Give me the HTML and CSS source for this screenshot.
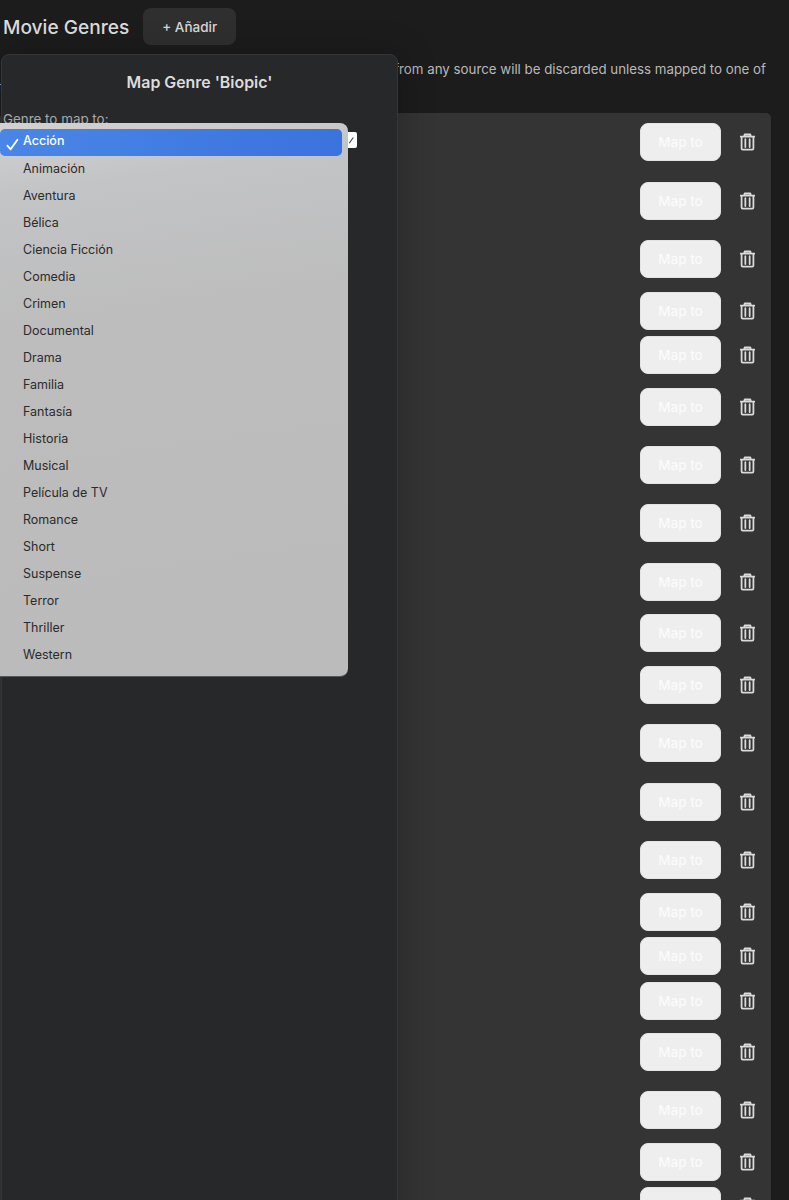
FILE: index.html
```html
<!DOCTYPE html>
<html lang="es">
<head>
<meta charset="utf-8">
<title>Movie Genres</title>
<link rel="stylesheet" href="styles.css">
</head>
<body>
<svg class="defs" width="0" height="0" aria-hidden="true">
  <symbol id="trash" viewBox="0 0 16 18">
    <path d="M.6 3.2h14.8M4.4 3 5 1h6l.6 2M1.7 3.4v12.6c0 .7.5 1.1 1.1 1.1h10.4c.6 0 1.1-.4 1.1-1.1V3.4M5.7 6v8.4M10.3 6v8.4" fill="none" stroke="currentColor" stroke-width="1.9" stroke-linecap="round" stroke-linejoin="round"/>
  </symbol>
</svg>
<main class="page">
  <header class="head">
    <h1 class="title">Movie Genres</h1>
    <button class="add">+ Añadir</button>
  </header>
  <div class="desc">
    <p class="desc-line">Genres from any source will be discarded unless mapped to one of</p>
    <p class="desc-rest">these.</p>
  </div>
  <section class="list">
    <div class="row"><button class="map">Map to</button><button class="del"><svg class="ico"><use href="#trash"/></svg></button></div>
    <div class="row"><button class="map">Map to</button><button class="del"><svg class="ico"><use href="#trash"/></svg></button></div>
    <div class="row"><button class="map">Map to</button><button class="del"><svg class="ico"><use href="#trash"/></svg></button></div>
    <div class="row short"><button class="map">Map to</button><button class="del"><svg class="ico"><use href="#trash"/></svg></button></div>
    <div class="row short"><button class="map">Map to</button><button class="del"><svg class="ico"><use href="#trash"/></svg></button></div>
    <div class="row"><button class="map">Map to</button><button class="del"><svg class="ico"><use href="#trash"/></svg></button></div>
    <div class="row"><button class="map">Map to</button><button class="del"><svg class="ico"><use href="#trash"/></svg></button></div>
    <div class="row"><button class="map">Map to</button><button class="del"><svg class="ico"><use href="#trash"/></svg></button></div>
    <div class="row"><button class="map">Map to</button><button class="del"><svg class="ico"><use href="#trash"/></svg></button></div>
    <div class="row short"><button class="map">Map to</button><button class="del"><svg class="ico"><use href="#trash"/></svg></button></div>
    <div class="row"><button class="map">Map to</button><button class="del"><svg class="ico"><use href="#trash"/></svg></button></div>
    <div class="row"><button class="map">Map to</button><button class="del"><svg class="ico"><use href="#trash"/></svg></button></div>
    <div class="row"><button class="map">Map to</button><button class="del"><svg class="ico"><use href="#trash"/></svg></button></div>
    <div class="row"><button class="map">Map to</button><button class="del"><svg class="ico"><use href="#trash"/></svg></button></div>
    <div class="row short"><button class="map">Map to</button><button class="del"><svg class="ico"><use href="#trash"/></svg></button></div>
    <div class="row short"><button class="map">Map to</button><button class="del"><svg class="ico"><use href="#trash"/></svg></button></div>
    <div class="row short"><button class="map">Map to</button><button class="del"><svg class="ico"><use href="#trash"/></svg></button></div>
    <div class="row"><button class="map">Map to</button><button class="del"><svg class="ico"><use href="#trash"/></svg></button></div>
    <div class="row"><button class="map">Map to</button><button class="del"><svg class="ico"><use href="#trash"/></svg></button></div>
    <div class="row short"><button class="map">Map to</button><button class="del"><svg class="ico"><use href="#trash"/></svg></button></div>
    <div class="row short"><button class="map">Map to</button><button class="del"><svg class="ico"><use href="#trash"/></svg></button></div>
  </section>
</main>
<aside class="modal">
  <h2 class="modal-title">Map Genre 'Biopic'</h2>
  <label class="modal-label">Genre to map to:</label>
  <div class="select"><span class="tick"></span></div>
</aside>
<ul class="menu">
  <li class="opt on"><svg class="check" viewBox="0 0 14 14"><path d="M1.5 8.2 5 12.2 12.3 1.8" fill="none" stroke="#fff" stroke-width="2" stroke-linecap="round" stroke-linejoin="round"/></svg>Acción</li>
  <li class="opt">Animación</li>
  <li class="opt">Aventura</li>
  <li class="opt">Bélica</li>
  <li class="opt">Ciencia Ficción</li>
  <li class="opt">Comedia</li>
  <li class="opt">Crimen</li>
  <li class="opt">Documental</li>
  <li class="opt">Drama</li>
  <li class="opt">Familia</li>
  <li class="opt">Fantasía</li>
  <li class="opt">Historia</li>
  <li class="opt">Musical</li>
  <li class="opt">Película de TV</li>
  <li class="opt">Romance</li>
  <li class="opt">Short</li>
  <li class="opt">Suspense</li>
  <li class="opt">Terror</li>
  <li class="opt">Thriller</li>
  <li class="opt">Western</li>
</ul>
</body>
</html>
```

FILE: styles.css
```css
* { box-sizing: border-box; }
html, body { margin: 0; height: 100%; overflow: hidden; }
body {
  background: #1c1c1c;
  font-family: Inter, "Noto Sans", sans-serif;
  color: #e0e0e0;
  position: relative;
}
.defs { position: absolute; }
.page { padding: 8px 18px 0 0; }
.head { display: flex; align-items: center; gap: 14px; height: 37px; padding-left: 3px; }
.title { margin: 0; font-size: 19.1px; font-weight: 500; color: #dcdcdc; }
.add {
  width: 93px; height: 37px; border: 0; border-radius: 8px;
  background: #2f2f2f; color: #d8d8d8;
  font: 500 13.5px Inter, sans-serif;
}
.desc {
  margin: 15px 5px 0 0; height: 53px; font-size: 13.3px; line-height: 18px;
  color: #b9b9b9;
}
.desc-line { margin: 0; text-align: right; white-space: nowrap; }
.desc-rest { margin: 0; }
.list { background: #343434; border-radius: 5px; padding-right: 16px; }
.row { display: flex; justify-content: flex-end; align-items: center; gap: 19px; height: 58.45px; }
.row.short { height: 44.5px; }
.map {
  width: 81px; height: 38px; border: 1px solid #e4e4e4; border-radius: 8px;
  background: #eeeeee; color: #fbfbfb;
  font: 500 13.5px Inter, sans-serif;
}
.del { border: 0; padding: 0; background: none; color: #dadada; width: 15px; height: 18px; display: flex; }
.ico { width: 16px; height: 18px; }

.modal {
  position: absolute; left: 1px; top: 54px; width: 397px; height: 1200px;
  background: #27282a; border: 1px solid #35363a; border-radius: 8px;
  box-shadow: 4px 0 34px rgba(0, 0, 0, .22);
}
.modal-title { margin: 18px 0 0; text-align: center; font-size: 15.9px; font-weight: 600; color: #dcdcdc; line-height: 20px; }
.modal-label { display: block; margin: 17px 0 0 1px; font-size: 13.4px; line-height: 18px; color: #a8a8a8; }
.select { width: 355px; height: 16px; margin-top: 4px; background: #fff; border-radius: 2px; position: relative; }
.tick { position: absolute; right: 5px; top: 4px; width: 4px; height: 7px; border-right: 1.5px solid #333; transform: rotate(35deg); }

.menu {
  position: absolute; left: 0; top: 123px; width: 348px; height: 554px;
  margin: 0; padding: 6px 6px 0 0; list-style: none;
  border-radius: 0 8px 8px 0;
  border-bottom: 1px solid #55565a;
  background: linear-gradient(172deg, #d2d2d2 0%, #c3c4c6 12%, #bdbdbd 35%, #bbbbbb 100%);
}
.opt {
  position: relative; height: 27px; padding-left: 23px;
  font-size: 12.5px; line-height: 26px; color: #2b2b2b;
}
.opt.on {
  background: linear-gradient(90deg, #4a86e6, #3a73dc);
  border-radius: 5px; color: #fff; font-weight: 500; line-height: 24px;
}
.check { position: absolute; left: 6px; top: 9px; width: 13px; height: 13px; }
```
